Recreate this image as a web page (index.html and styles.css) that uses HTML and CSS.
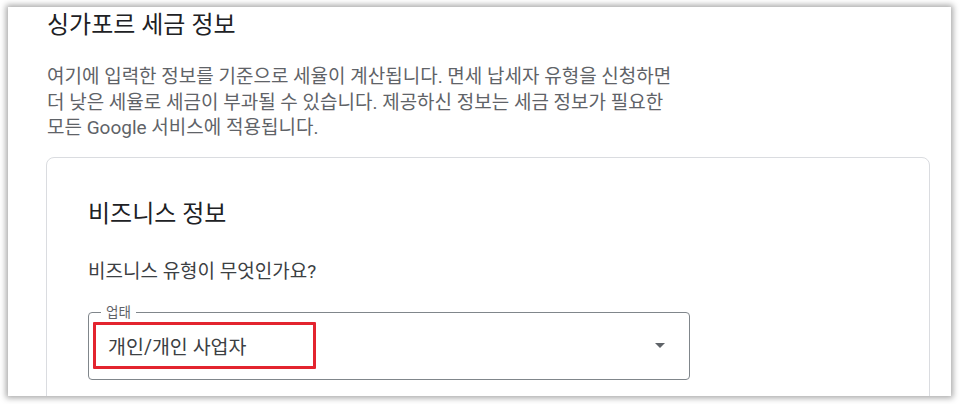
FILE: index.html
```html
<!DOCTYPE html>
<html lang="ko">

<head>
  <meta charset="utf-8">
  <meta name="viewport" content="width=device-width, initial-scale=1.0">
  <title>싱가포르 세금 정보</title>
  <link rel="stylesheet" href="styles.css">
</head>

<body>
  <div class="window">
    <h1 class="title">싱가포르 세금 정보</h1>
    <p class="desc">여기에 입력한 정보를 기준으로 세율이 계산됩니다. 면세 납세자 유형을 신청하면 더 낮은 세율로 세금이 부과될 수 있습니다. 제공하신 정보는 세금 정보가 필요한 모든 Google 서비스에 적용됩니다.</p>

    <div class="card">
      <h2 class="card-title">비즈니스 정보</h2>
      <p class="question">비즈니스 유형이 무엇인가요?</p>

      <div class="select">
        <span class="select-label">업태</span>
        <span class="select-value">개인/개인 사업자</span>
        <svg class="select-arrow" width="10" height="5" viewBox="0 0 10 5">
          <path d="M0 0 L10 0 L5 5 Z" fill="#5f6368" />
        </svg>
        <!-- red highlight around the chosen value -->
        <span class="highlight"></span>
      </div>
    </div>
  </div>
</body>

</html>
```

FILE: styles.css
```css
* {
  margin: 0;
  padding: 0;
  box-sizing: border-box;
}

body {
  background: #fff;
  font-family: Roboto, "Noto Sans CJK KR", sans-serif;
  height: 404px;
  overflow: hidden;
  padding: 7px 9px 0 8px;
}

.window {
  width: 943px;
  height: 389px;
  background: #fff;
  overflow: hidden;
  padding: 0 21px 0 38px;
  box-shadow: 0 0 6px 2px rgba(0, 0, 0, 0.35);
}

.title {
  font-size: 24px;
  font-weight: 400;
  color: #202124;
  line-height: 32px;
  margin-top: 2px;
  margin-left: 1px;
}

.desc {
  max-width: 645px;
  font-size: 19px;
  line-height: 25.5px;
  color: #5f6368;
  margin-top: 23px;
  margin-left: 1px;
  word-break: keep-all;
}

.card {
  margin-top: 16px;
  border: 1px solid #dadce0;
  border-radius: 8px;
  padding: 40px 41px 40px;
  height: 300px;
}

.card-title {
  font-size: 24px;
  font-weight: 400;
  color: #202124;
  line-height: 32px;
}

.question {
  font-size: 19px;
  line-height: 24px;
  color: #3c4043;
  margin-top: 30px;
}

.select {
  position: relative;
  margin-top: 28px;
  width: 602px;
  height: 68px;
  border: 1px solid #80868b;
  border-radius: 4px;
  display: flex;
  align-items: center;
  padding: 0 24px 0 19px;
}

.select-label {
  position: absolute;
  top: -10px;
  left: 12px;
  padding: 0 5px;
  background: #fff;
  font-size: 13.5px;
  line-height: 18px;
  color: #5f6368;
}

.select-value {
  flex: 1;
  font-size: 19.5px;
  color: #3c4043;
}

.highlight {
  position: absolute;
  left: 4px;
  top: 9px;
  width: 223px;
  height: 47px;
  border: 3px solid #e3242f;
  border-radius: 1px;
}
```
